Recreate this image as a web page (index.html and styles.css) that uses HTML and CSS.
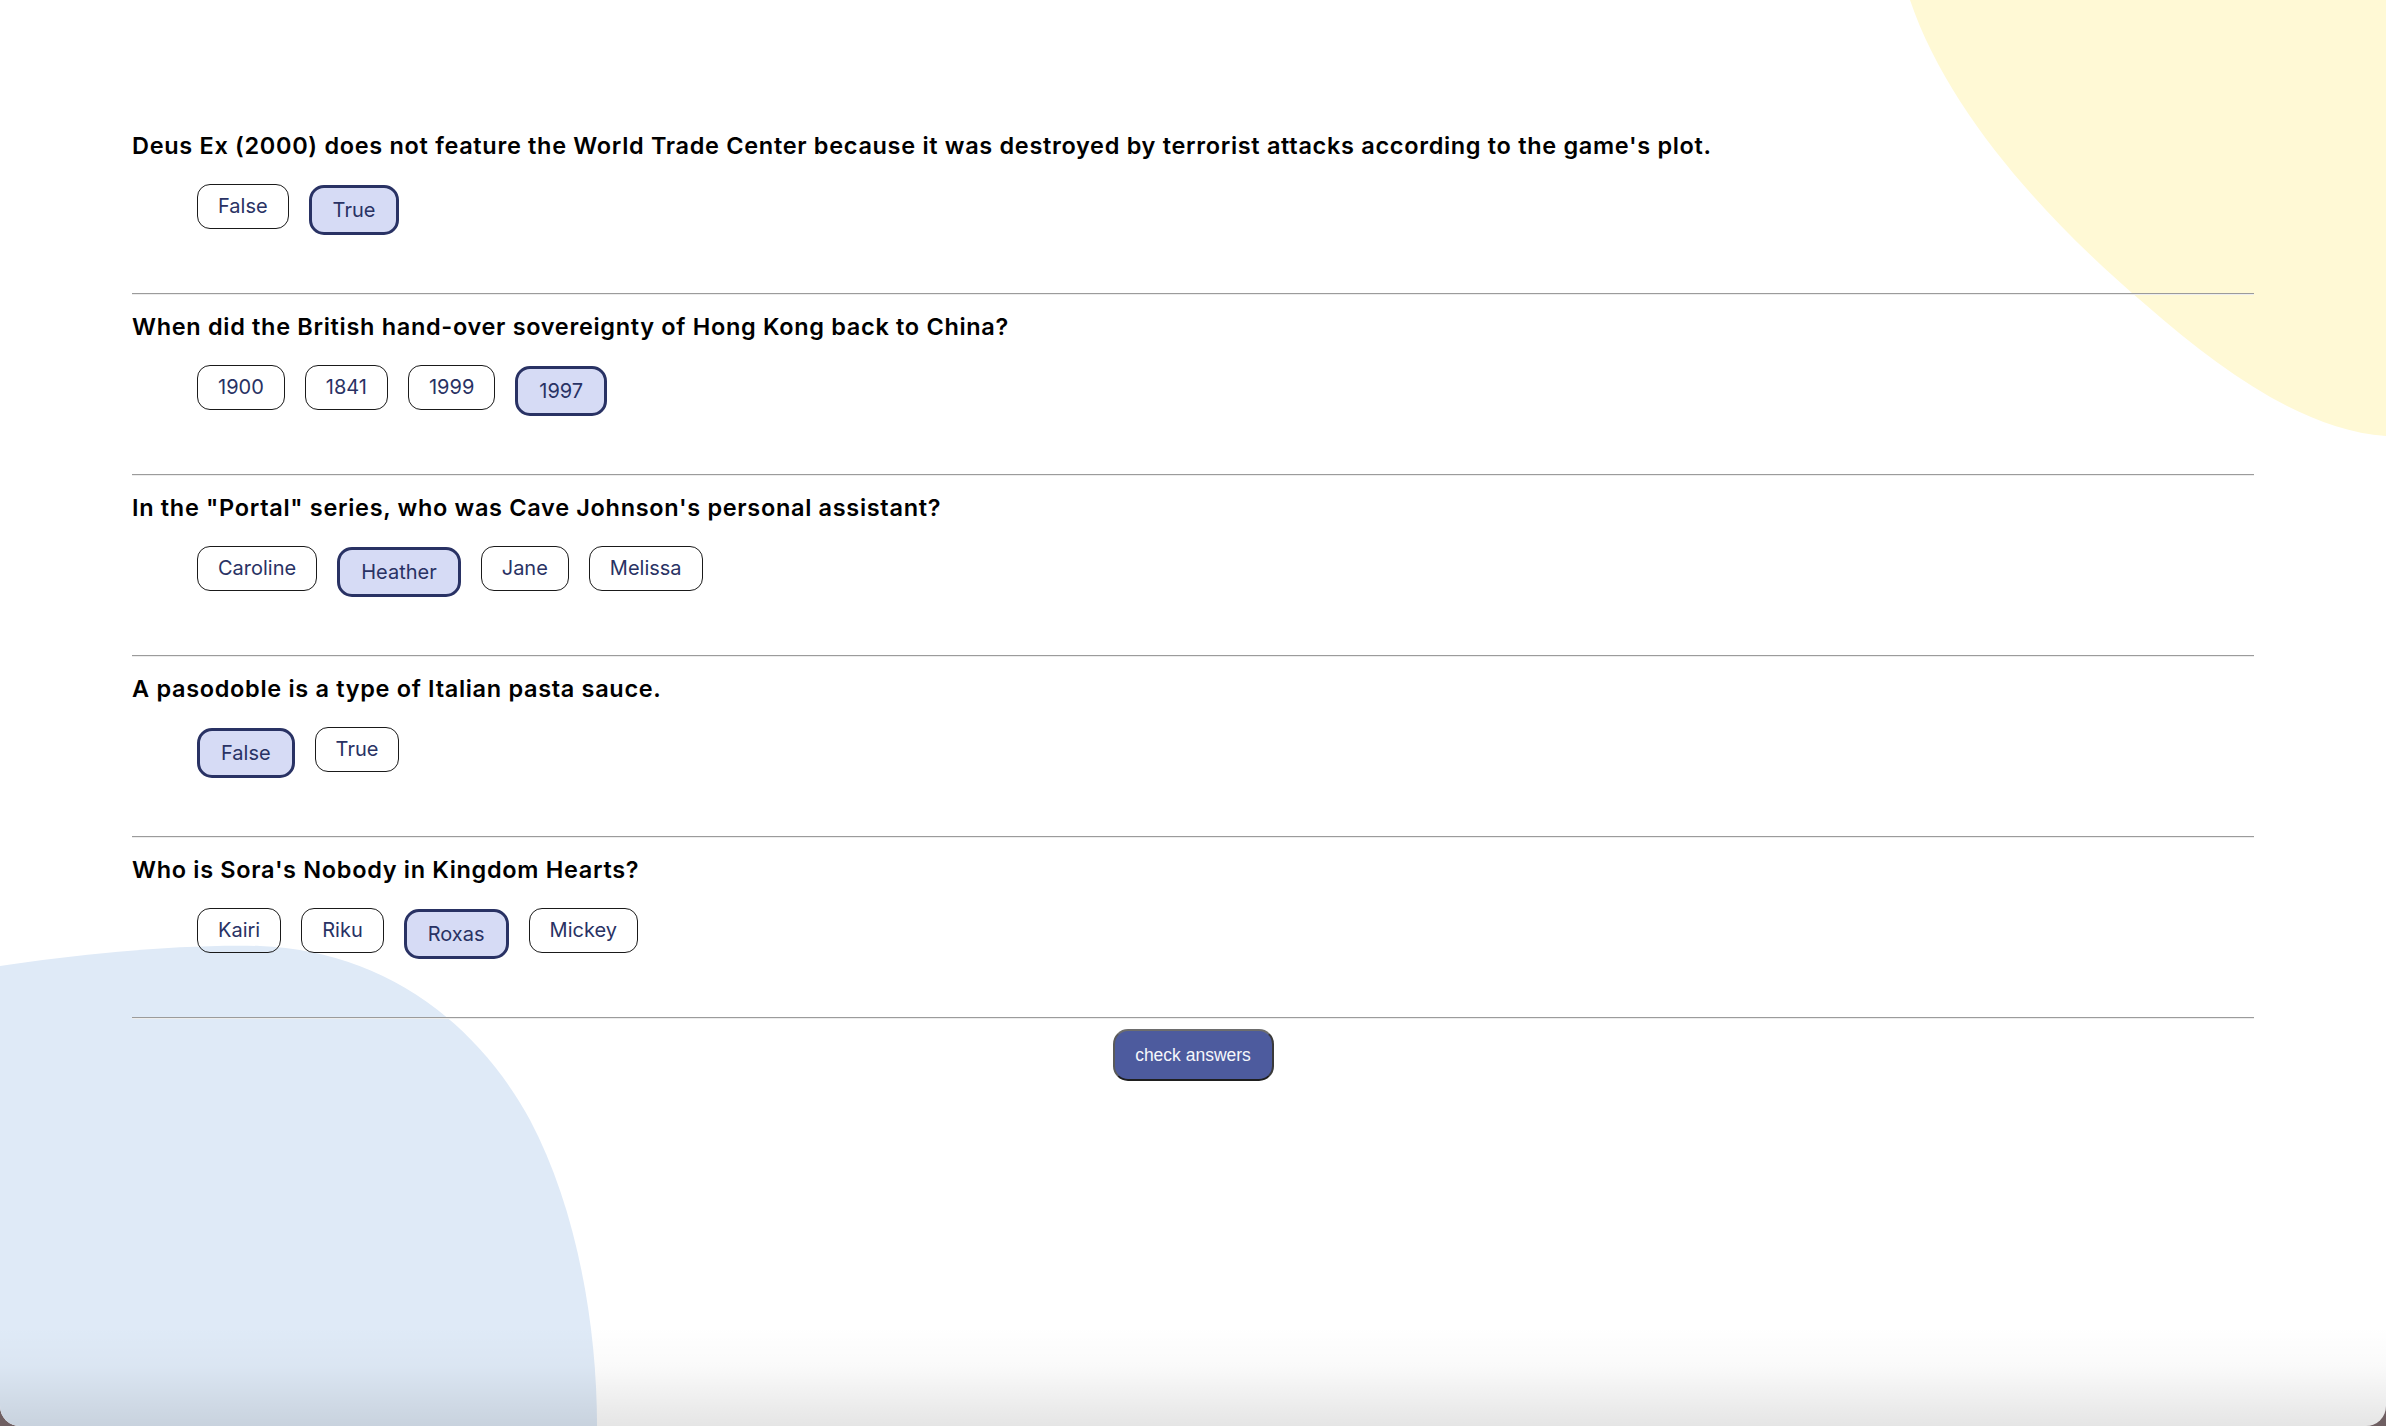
FILE: index.html
```html
<!DOCTYPE html>
<html lang="en">
<head>
<meta charset="utf-8">
<title>Quizzical</title>
<link rel="stylesheet" href="styles.css">
</head>
<body>
<svg class="blob blob-yellow" viewBox="0 0 500 450" aria-hidden="true"><path d="M24 0 C62 112 160 220 260 305 C340 375 420 430 500 436 L500 0 Z"/></svg>
<svg class="blob blob-blue" viewBox="0 0 610 486" aria-hidden="true"><path d="M0 26 C80 14 180 4 260 6 C370 10 470 70 530 180 C575 265 597 380 597 486 L0 486 Z"/></svg>

<main class="quiz">
  <section class="question">
    <h2 class="q-title">Deus Ex (2000) does not feature the World Trade Center because it was destroyed by terrorist attacks according to the game's plot.</h2>
    <div class="answers">
      <button class="answer">False</button>
      <button class="answer selected">True</button>
    </div>
    <hr class="divider">
  </section>
  <section class="question">
    <h2 class="q-title">When did the British hand-over sovereignty of Hong Kong back to China?</h2>
    <div class="answers">
      <button class="answer">1900</button>
      <button class="answer">1841</button>
      <button class="answer">1999</button>
      <button class="answer selected">1997</button>
    </div>
    <hr class="divider">
  </section>
  <section class="question">
    <h2 class="q-title">In the "Portal" series, who was Cave Johnson's personal assistant?</h2>
    <div class="answers">
      <button class="answer">Caroline</button>
      <button class="answer selected">Heather</button>
      <button class="answer">Jane</button>
      <button class="answer">Melissa</button>
    </div>
    <hr class="divider">
  </section>
  <section class="question">
    <h2 class="q-title">A pasodoble is a type of Italian pasta sauce.</h2>
    <div class="answers">
      <button class="answer selected">False</button>
      <button class="answer">True</button>
    </div>
    <hr class="divider">
  </section>
  <section class="question">
    <h2 class="q-title">Who is Sora's Nobody in Kingdom Hearts?</h2>
    <div class="answers">
      <button class="answer">Kairi</button>
      <button class="answer">Riku</button>
      <button class="answer selected">Roxas</button>
      <button class="answer">Mickey</button>
    </div>
    <hr class="divider">
  </section>
  <div class="actions">
    <button class="check-btn">check answers</button>
  </div>
</main>
<div class="shade" aria-hidden="true"></div>
</body>
</html>
```
FILE: styles.css
```css
html {
  background: #6f5f62;
  height: 1426px;
  overflow: hidden;
}
body {
  margin: 0;
  height: 1426px;
  background: #ffffff;
  position: relative;
  overflow: hidden;
  border-radius: 0 0 20px 20px;
  font-family: "Inter", "Liberation Sans", sans-serif;
}
.blob {
  position: absolute;
  z-index: 0;
}
.blob-yellow {
  top: 0;
  right: 0;
  width: 500px;
  height: 450px;
}
.blob-yellow path { fill: #fff9d5; }
.blob-blue {
  left: 0;
  bottom: 0;
  width: 610px;
  height: 486px;
}
.blob-blue path { fill: #dfeaf7; }
.shade {
  position: absolute;
  left: 0;
  right: 0;
  bottom: 0;
  height: 100px;
  background: linear-gradient(to bottom, rgba(0,0,0,0) 0%, rgba(0,0,0,0.02) 40%, rgba(0,0,0,0.1) 100%);
  z-index: 2;
  pointer-events: none;
}
.quiz {
  position: relative;
  z-index: 1;
  padding: 132px 132px 0 132px;
}
.question {
  display: flex;
  flex-direction: column;
}
.question + .question {
  padding-top: 18px;
}
.q-title {
  margin: 0;
  font-family: "Inter", "Liberation Sans", sans-serif;
  font-weight: 600;
  font-size: 23.5px;
  line-height: 28px;
  letter-spacing: 0.68px;
  color: #000000;
}
.answers {
  display: flex;
  align-items: flex-start;
  gap: 20px;
  margin-top: 24px;
  padding-left: 65px;
  height: 51px;
}
.answer {
  font-family: "Inter", "Liberation Sans", sans-serif;
  font-size: 20px;
  font-weight: 400;
  line-height: 23px;
  color: #293264;
  background: transparent;
  border: 1px solid #1a1a1a;
  border-radius: 13px;
  padding: 10px 20px;
  margin: 0;
}
.answer.selected {
  background: #d6dbf5;
  border: 3px solid #293264;
  border-radius: 15px;
  padding: 11px 21px 10px 21px;
  margin-top: 1px;
}
.divider {
  margin: 58px 0 0 0;
  height: 0;
  border: 0;
  border-top: 1px solid #9b9b9b;
  border-bottom: 1px solid #ededed;
}
.actions {
  display: flex;
  justify-content: center;
  padding-top: 10px;
}
.check-btn {
  font-family: "Liberation Sans", Arial, sans-serif;
  font-size: 17.5px;
  color: #f5f7fb;
  background: #4d5b9e;
  border: 2px solid;
  border-color: #6d6d6d #3a3a3a #1f1f1f #5a5a5a;
  border-radius: 15px;
  width: 161px;
  height: 52px;
  padding: 0;
}
```
